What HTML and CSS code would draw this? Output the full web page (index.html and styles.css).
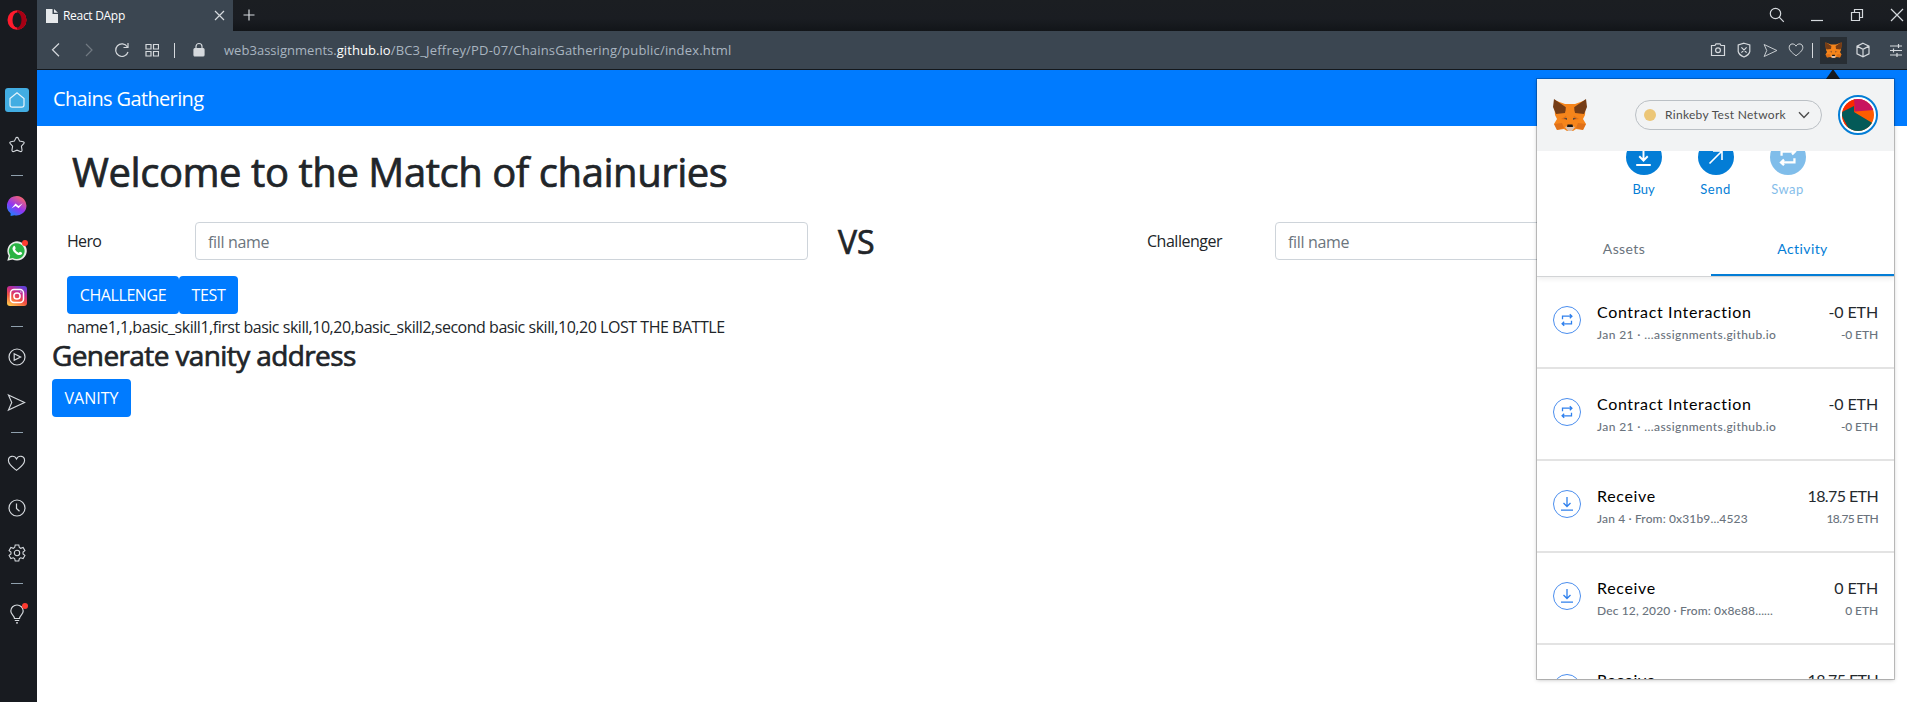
FILE: index.html
```html
<!DOCTYPE html>
<html lang="en">
<head>
<meta charset="utf-8">
<title>React DApp</title>
<link rel="stylesheet" href="styles.css">
</head>
<body>
<svg class="defs" width="0" height="0">
  <symbol id="fox" viewBox="0 0 34 32">
    <path fill="#f6851b" d="M1 1 12 5h10L33 1l-1 15-2 4 3 5-3 6-7-1-3 2h-6l-3-2-7 1-3-6 3-5-2-4z"/>
    <path fill="#763d16" d="M1 0 14 9 12 14 3 15 0 8zM33 0 20 9l2 5 9 1 3-7z"/>
    <path fill="#f6851b" d="M13 6h8l1 13-3 6h-4l-3-6z"/>
    <path fill="#cd6116" d="m8 20 5-3 1 4zM26 20l-5-3-1 4zM1 25l8-1 2 5-7 2zM33 25l-8-1-2 5 7 2z" opacity=".55"/>
    <path fill="#5c4a3d" d="m10.500 19 3.500 0 0 2zM23.500 19l-3.500 0 0 2z"/>
    <path fill="#d7c1b3" d="m12 28 3-1h4l3 1-3 4h-4z"/>
    <path fill="#161616" d="M14.500 25.500h5l.5 2.500h-6z"/>
  </symbol>
  <symbol id="heart" viewBox="0 0 20 20"><path d="M10 17.200C6 14 1.500 11 1.500 6.800 1.500 1.500 8 1 10 5.200 12 1 18.500 1.500 18.500 6.800 18.500 11 14 14 10 17.200z"/></symbol>
  <symbol id="plane" viewBox="0 0 20 20"><path d="M1.500 2 18.500 10 1.500 18 5 10z"/></symbol>
  <symbol id="swap" viewBox="0 0 14 14"><path d="M2.500 6.200V3.200h9M9.800 1.200l2.100 2-2.100 2M11.500 7.800v3h-9M4.200 8.800l-2.100 2 2.100 2"/></symbol>
  <symbol id="down" viewBox="0 0 14 14"><path d="M7 0v9.500M3.500 6 7 9.500 10.500 6M1 13.200h12"/></symbol>
</svg>

<div class="browser">
  <nav class="side">
    <div class="opera"><svg width="20" height="20" viewBox="0 0 20 20" class="solid"><ellipse cx="10" cy="10" rx="9.500" ry="9.800" fill="#ff1b2d"/><path d="M10 .2a9.500 9.800 0 0 1 0 19.600z" fill="#a70014"/><ellipse cx="10" cy="10" rx="4.500" ry="7.600" fill="#181b20"/></svg></div>
    <div class="slot"><span class="home"><svg width="18" height="18" viewBox="0 0 18 18"><path d="M2 7.500 9 1.800 16 7.500V14q0 2.200-2.200 2.200H4.200Q2 16.200 2 14z"/></svg></span></div>
    <div class="slot"><svg width="18" height="18" viewBox="0 0 20 20"><path d="M10 1.500q1 0 1.400 1l1.500 3.200 3.900.6q2 .6.700 2.200l-2.600 2.800.7 4.300q0 2.200-2 1.600L10 15.700l-3.600 1.500q-2 .6-2-1.600l.7-4.300L2.500 8.500Q1.200 6.900 3.200 6.300l3.900-.6 1.500-3.200q.4-1 1.400-1z"/></svg></div>
    <div class="dash"></div>
    <div class="slot"><svg width="20" height="20" viewBox="0 0 20 20" class="solid"><defs><linearGradient id="ms" x1=".2" y1="1" x2=".8" y2="0"><stop offset="0" stop-color="#1687ff"/><stop offset=".45" stop-color="#9334f2"/><stop offset="1" stop-color="#ff6a61"/></linearGradient></defs><path fill="url(#ms)" d="M10 0a10 9.700 0 1 1-2.500 19.200L3.600 20v-2.800A10 9.700 0 0 1 10 0z"/><path d="m4.500 12.500 4-5 3 2.500 4.200-2.700-4.100 5-3-2.400z" fill="#fff"/></svg></div>
    <div class="slot"><svg width="20" height="20" viewBox="0 0 20 20" class="solid"><path fill="#e9eeea" d="M.3 19.800 1.700 14.800A9.700 9.600 0 1 1 5.500 18.400z"/><path fill="#29b344" d="m2.300 17.800.9-3.300a7.900 7.900 0 1 1 2.600 2.400z"/><path fill="#fff" d="M6.500 5.200c1-.8 1.500-.2 2.100 1.700.2.700-.8 1.300-.5 1.700.9 1.500 1.900 2.500 3.400 3.200.5.200 1-1.300 1.700-1l1.900 1c.4 1.100-.8 2.400-2.300 2.300C9 14 5 9.600 5.500 6.900z"/></svg><i class="badge"></i></div>
    <div class="slot"><svg width="20" height="20" viewBox="0 0 20 20"><defs><linearGradient id="ig" x1=".2" y1="1" x2=".7" y2="0"><stop offset="0" stop-color="#ffc74d"/><stop offset=".4" stop-color="#f2503f"/><stop offset=".7" stop-color="#c72c91"/><stop offset="1" stop-color="#6442d6"/></linearGradient></defs><rect width="20" height="20" rx="3" fill="url(#ig)" stroke="none"/><g stroke="#fff" stroke-width="1.500"><rect x="3.500" y="3.500" width="13" height="13" rx="3.500"/><circle cx="10" cy="10" r="3.100"/><path d="M13.500 6.100h.8"/></g></svg></div>
    <div class="dash"></div>
    <div class="slot"><svg width="18" height="18" viewBox="0 0 18 18"><circle cx="9" cy="9" r="8"/><path d="M6.200 5.800 12.600 9l-6.400 3.200z"/></svg></div>
    <div class="slot"><svg width="19" height="19"><use href="#plane"/></svg></div>
    <div class="dash"></div>
    <div class="slot"><svg width="19" height="19"><use href="#heart"/></svg></div>
    <div class="slot"><svg width="18" height="18" viewBox="0 0 18 18"><circle cx="9" cy="9" r="8"/><path d="M8.500 4.500v5l3 2.800"/></svg></div>
    <div class="slot"><svg width="18" height="18" viewBox="0 0 20 20"><path d="M8 1.200h4l.6 2.700 1.500.9 2.700-.9 2 3.500L16.700 9v2l2.100 1.700-2 3.500-2.700-.9-1.500.9-.6 2.600H8l-.6-2.600-1.500-.9-2.700.9-2-3.500L3.300 11V9L1.200 7.400l2-3.500 2.700.9 1.500-.9z"/><circle cx="10" cy="10" r="3"/></svg></div>
    <div class="dash"></div>
    <div class="slot"><svg width="16" height="20" viewBox="0 0 16 20"><path d="M5.500 14.500C5.500 11.500 1.800 10.500 1.800 7a6.200 6 0 0 1 12.400 0c0 3.500-3.700 4.500-3.700 7.500zM5.800 16.500h4.400M7 18.800h2"/></svg><i class="badge"></i></div>
  </nav>

  <div class="window">
    <div class="tabs">
      <div class="tab">
        <svg width="12" height="14" viewBox="0 0 12 14" class="solid"><path fill="#e6e9eb" d="M0 0h6.500v5H12v9H0zM8 0l4 3.800H8z"/></svg>
        <span class="tab-name">React DApp</span>
        <svg width="11" height="11" viewBox="0 0 11 11"><path d="m1 1 9 9M10 1l-9 9"/></svg>
      </div>
      <svg class="plus" width="12" height="12" viewBox="0 0 12 12"><path d="M6 .5v11M.5 6h11"/></svg>
      <div class="controls">
        <svg width="16" height="16" viewBox="0 0 16 16"><circle cx="6.500" cy="6.500" r="5.200"/><path d="m10.200 10.200 4.600 4.600"/></svg>
        <svg width="16" height="16" viewBox="0 0 16 16"><path d="M2 13.500h12"/></svg>
        <svg width="16" height="16" viewBox="0 0 16 16"><path d="M2.500 5.500h8v8h-8zM5.500 5.500v-3h8v8h-3"/></svg>
        <svg width="16" height="16" viewBox="0 0 16 16"><path d="m2 2 12 12M14 2 2 14"/></svg>
      </div>
    </div>
    <div class="bar">
      <div class="nav-icons">
        <svg width="16" height="16" viewBox="0 0 16 16"><path d="m11 1.500-6.500 6.300L11 14.200"/></svg>
        <svg class="off" width="16" height="16" viewBox="0 0 16 16"><path d="m5 2 6 6-6 6"/></svg>
        <svg width="16" height="16" viewBox="0 0 16 16"><path d="M14 10a6.300 6.300 0 1 1-.7-5.200M14 1v4.500H9.500"/></svg>
        <svg class="grid" width="14" height="14" viewBox="0 0 14 14"><path d="M1 1.500h5V6H1zM8.500 1.500h5V6h-5zM1 8.500h5V13H1zM8.500 8.500h5V13h-5z"/></svg>
      </div>
      <i class="sep"></i>
      <svg class="lock" width="12" height="16" viewBox="0 0 12 16"><rect x="1" y="6.500" width="10" height="7.500" rx="1" fill="#d5d9dd"/><path d="M3 7V4.500a3 3 0 0 1 6 0V7"/></svg>
      <div class="url"><span class="sub">web3assignments.</span><span class="host">github.io</span><span class="path">/BC3_Jeffrey/PD-07/ChainsGathering/public/index.html</span></div>
      <div class="tools">
        <svg width="16" height="16" viewBox="0 0 16 16"><path d="M1.500 3.500H5L6 1.800h4l1 1.700h3.500v10h-13z"/><circle cx="8" cy="8.300" r="2.400"/></svg>
        <svg width="16" height="16" viewBox="0 0 16 16"><path d="M8 1.200 13.800 3v6.500Q13 13 8 15 3 13 2.200 9.500V3zM5.400 5.400l5.200 5.200M10.600 5.400l-5.200 5.200"/></svg>
        <svg width="15" height="15"><use href="#plane"/></svg>
        <svg width="16" height="16"><use href="#heart"/></svg>
      </div>
      <i class="sep"></i>
      <div class="ext"><svg width="17" height="16" class="solid"><use href="#fox"/></svg></div>
      <svg class="cube" width="16" height="16" viewBox="0 0 16 16"><path d="m8 1.200 6 2.900v7.700l-6 3-6-3V4.100zM2 4.100l6 3.200 6-3.200M8 7.300v7.500"/></svg>
      <svg class="sliders" width="14" height="14" viewBox="0 0 14 14"><path d="M1 3h12M1 7.500h12M1 12h12M9.500 1v4M4.500 5.500v4M8 10v4"/></svg>
    </div>

    <main class="page">
      <header class="navbar">Chains Gathering</header>
      <section class="content">
        <h1>Welcome to the Match of chainuries</h1>
        <div class="fighters">
          <div class="fighter">
            <label class="hero">Hero</label>
            <div class="field">fill name</div>
          </div>
          <h2 class="versus">VS</h2>
          <div class="fighter">
            <label class="challenger">Challenger</label>
            <div class="field">fill name</div>
          </div>
        </div>
        <div class="actions"><button class="btn challenge">CHALLENGE</button><button class="btn test">TEST</button></div>
        <p class="result">name1,1,basic_skill1,first basic skill,10,20,basic_skill2,second basic skill,10,20 LOST THE BATTLE</p>
        <h3>Generate vanity address</h3>
        <button class="btn vanity">VANITY</button>
      </section>
    </main>
  </div>

  <i class="pointer"></i>
  <aside class="wallet">
    <header class="wallet-head">
      <svg width="34" height="32" class="solid"><use href="#fox"/></svg>
      <div class="network"><i class="dot"></i><span>Rinkeby Test Network</span><svg width="12" height="8" viewBox="0 0 12 8"><path d="m1 1.300 5 5.200 5-5.200"/></svg></div>
      <div class="avatar"><svg width="32" height="32" viewBox="0 0 32 32" class="solid"><defs><clipPath id="av"><circle cx="16" cy="16" r="16"/></clipPath></defs><g clip-path="url(#av)"><path fill="#ff5c00" d="M0 0h32v32H0z"/><path fill="#fc2a00" d="M0 0h13v12L6 32H0z"/><path fill="#c8145f" d="M12 0h20v11l-19 1.500z"/><path fill="#045a58" d="M12 7v6l20 12-8 9H9L0 17v-4z"/></g></svg></div>
    </header>
    <div class="wallet-actions">
      <div class="act"><span class="round"><svg width="17" height="17"><use href="#down"/></svg></span><b class="buy">Buy</b></div>
      <div class="act"><span class="round"><svg width="18" height="18" viewBox="0 0 18 18"><path d="M2.500 15.500 15 3M6 3h9v9"/></svg></span><b>Send</b></div>
      <div class="act faded"><span class="round"><svg width="20" height="20"><use href="#swap"/></svg></span><b>Swap</b></div>
    </div>
    <div class="wallet-tabs"><span>Assets</span><span class="on">Activity</span></div>
    <ul class="log">
      <li><span class="ring"><svg width="14" height="14"><use href="#swap"/></svg></span><div class="what"><strong>Contract Interaction</strong><small class="site">Jan 21 · ...assignments.github.io</small></div><div class="sum"><em>-0 ETH</em><small>-0 ETH</small></div></li>
      <li><span class="ring"><svg width="14" height="14"><use href="#swap"/></svg></span><div class="what"><strong>Contract Interaction</strong><small class="site">Jan 21 · ...assignments.github.io</small></div><div class="sum"><em>-0 ETH</em><small>-0 ETH</small></div></li>
      <li><span class="ring"><svg width="14" height="14"><use href="#down"/></svg></span><div class="what"><strong>Receive</strong><small>Jan 4 · From: 0x31b9...4523</small></div><div class="sum long"><em>18.75 ETH</em><small>18.75 ETH</small></div></li>
      <li><span class="ring"><svg width="14" height="14"><use href="#down"/></svg></span><div class="what"><strong>Receive</strong><small>Dec 12, 2020 · From: 0x8e88......</small></div><div class="sum"><em>0 ETH</em><small>0 ETH</small></div></li>
      <li><span class="ring"><svg width="14" height="14"><use href="#down"/></svg></span><div class="what"><strong>Receive</strong></div><div class="sum long"><em>18.75 ETH</em></div></li>
    </ul>
  </aside>
</div>
</body>
</html>
```
FILE: styles.css
```css
* { box-sizing: border-box; }
body { margin: 0; font-family: "Open Sans", "Noto Sans", sans-serif; color: #212529; overflow: hidden; }
svg { display: block; flex: none; fill: none; stroke: #d5d9dd; stroke-width: 1.2; }
svg.solid { stroke: none; }
.defs { position: absolute; }
h1, h2, h3, p, ul { margin: 0; padding: 0; font-weight: 500; }
h1, h2, h3 { -webkit-text-stroke: .7px #212529; }
i { font-style: normal; }

.browser { position: relative; display: flex; width: 1907px; height: 702px; background: #181b20; overflow: hidden; }

/* sidebar */
.side { width: 37px; flex: none; padding-right: 4px; }
.opera { height: 77.5px; padding: 10px 0 0 7px; }
.slot { position: relative; height: 45px; display: flex; align-items: center; justify-content: center; }
.home { width: 24px; height: 24px; border-radius: 3px; background: #42ade2; display: flex; align-items: center; justify-content: center; }
.home svg { stroke: #e6f4fb; }
.dash { height: 16px; display: flex; align-items: center; justify-content: center; }
.dash::before { content: ""; width: 12px; height: 1px; background: #8fa0ad; }
.badge { position: absolute; left: 22px; top: 11px; width: 6px; height: 6px; border-radius: 50%; background: #ff3b30; }

/* browser chrome */
.window { flex: 1; min-width: 0; display: flex; flex-direction: column; }
.tabs { height: 31px; display: flex; align-items: center; background: linear-gradient(#1b1e22, #1a1d22 60%, #121519); }
.tab { width: 196px; height: 31px; background: #3b4651; display: flex; align-items: center; padding: 0 8px 0 9px; }
.tab-name { flex: 1; margin-left: 5px; font-size: 12px; letter-spacing: -.3px; color: #fff; }
.plus { margin: -2px 0 0 10px; }
.controls { margin: -2px 2px 0 auto; display: flex; gap: 24px; }
.bar { height: 39px; background: #3b4651; border-bottom: 1px solid #14181c; display: flex; align-items: center; }
.nav-icons { display: flex; align-items: center; gap: 17px; margin-left: 11px; width: 124px; }
.off { opacity: .35; }
.grid { margin-left: -2px; }
.sep { width: 1px; height: 15px; background: #d5d9dd; margin-left: 2px; }
.lock { margin: 0 19px 0 18px; }
.url { font-size: 13px; color: #a9b5c0; white-space: pre; display: flex; }
.sub { letter-spacing: .03px; }
.host { color: #fff; letter-spacing: .06px; }
.path { letter-spacing: .19px; }
.tools { margin-left: auto; display: flex; align-items: center; gap: 10.500px; margin-right: 6px; }
.ext { width: 27px; height: 27px; margin-left: 7px; background: #282e34; display: flex; align-items: center; justify-content: center; }
.cube { margin-left: 8px; }
.sliders { margin: 0 4px 0 18px; }

/* page */
.page { flex: 1; background: #fff; }
.navbar { height: 56px; padding: 14px 16px 12px; background: #007bff; color: #fff; font-size: 20px; line-height: 30px; letter-spacing: -.64px; }
.content { padding: 22px 15px 0; font-size: 16px; line-height: 24px; }
h1 { padding-left: 20px; font-size: 40px; line-height: 48px; letter-spacing: -.44px; margin-bottom: 26px; }
.fighters { display: flex; padding-left: 15px; height: 54px; }
.fighter { display: flex; }
.fighter label { width: 128px; padding-top: 7px; }
.hero { letter-spacing: -.7px; }
.challenger { letter-spacing: -.48px; }
.field { width: 613px; height: 38px; padding: 7px 12px 5px; border: 1px solid #ced4da; border-radius: 4px; color: #6c757d; letter-spacing: -.33px; }
.versus { width: 339px; padding: 1px 0 0 30px; font-size: 32px; line-height: 38px; }
.actions { padding-left: 15px; display: flex; }
.btn { display: block; height: 38px; padding: 0; border: 0; border-radius: 4px; background: #007bff; color: #fff; font: 400 16px/24px "Open Sans", sans-serif; }
.challenge { width: 112px; letter-spacing: -.42px; }
.test { width: 59px; letter-spacing: -.35px; }
.vanity { width: 79px; }
.result { padding: 1px 0 0 15px; font-weight: 400; letter-spacing: -.466px; white-space: nowrap; }
h3 { font-size: 28px; line-height: 33px; letter-spacing: -.61px; margin-bottom: 7px; }

/* wallet popup */
.pointer { position: absolute; left: 1826px; top: 69px; border: solid transparent; border-width: 0 7px 10px; border-bottom-color: #181b20; }
.wallet { position: absolute; left: 1537px; top: 79px; width: 357px; height: 600px; background: #fff; overflow: hidden; font-family: Lato, sans-serif; box-shadow: 0 0 0 1px rgba(0,0,0,.2), 0 1px 4px rgba(0,0,0,.25); }
.wallet-head { position: relative; z-index: 1; height: 72px; padding: 0 16px; background: #f2f3f4; display: flex; align-items: center; }
.network { width: 187px; height: 30px; margin-left: 48px; border: 1px solid #bbc0c5; border-radius: 15px; display: flex; align-items: center; padding: 0 11px 0 8px; font-size: 12px; line-height: 14px; letter-spacing: .3px; color: #4d4d4d; }
.network span { padding-bottom: 1px; }
.network svg { margin-left: auto; stroke: #4d4d4d; stroke-width: 1.4; }
.dot { width: 12px; height: 12px; margin-right: 9px; border-radius: 50%; background: #ecc677; }
.avatar { width: 40px; height: 40px; margin-left: 16px; padding: 2px; border: 2px solid #037dd6; border-radius: 50%; background: #fff; }
.wallet-actions { height: 77px; margin-top: -12px; display: flex; justify-content: center; }
.act { width: 72px; display: flex; flex-direction: column; align-items: center; color: #037dd6; }
.act b { margin-top: 6px; font-weight: 400; font-size: 13px; line-height: 16px; letter-spacing: .5px; }
.act .buy { letter-spacing: 0; }
.round { width: 36px; height: 36px; border-radius: 50%; background: #037dd6; display: flex; align-items: center; justify-content: center; }
.round svg { stroke: #fff; stroke-width: 1.6; }
.faded { opacity: .5; }
.wallet-tabs { display: flex; height: 61px; border-bottom: 1px solid #d2d4d6; font-size: 14px; line-height: 17px; letter-spacing: .4px; color: #6a737d; text-align: center; box-shadow: 0 2px 5px rgba(0,0,0,.07); clip-path: inset(0 0 -8px); }
.wallet-tabs span { width: 174px; padding-top: 24px; }
.wallet-tabs .on { width: 183px; color: #037dd6; border-bottom: 2px solid #037dd6; }
.log { list-style: none; }
.log li { height: 92px; padding: 24px 16px 0; border-bottom: 2px solid #e3e3e3; display: flex; }
.ring { width: 28px; height: 28px; margin: 5px 16px 0 0; border: 1px solid #4b8eee; border-radius: 50%; display: flex; align-items: center; justify-content: center; }
.ring svg { stroke: #2f80ed; stroke-width: 1.3; }
.what, .sum { white-space: nowrap; }
.what { flex: 1; }
.sum { text-align: right; }
strong, em { display: block; font: 400 16px/22px Lato, sans-serif; color: #000; letter-spacing: .65px; }
em { color: #24292e; letter-spacing: -.1px; }
small { display: block; margin-top: 3px; font-size: 12px; line-height: 17px; color: #6a737d; letter-spacing: .14px; }
.site { letter-spacing: .4px; }
.sum small { letter-spacing: -.1px; }
.long em, .sum.long small { letter-spacing: -.6px; }
```
